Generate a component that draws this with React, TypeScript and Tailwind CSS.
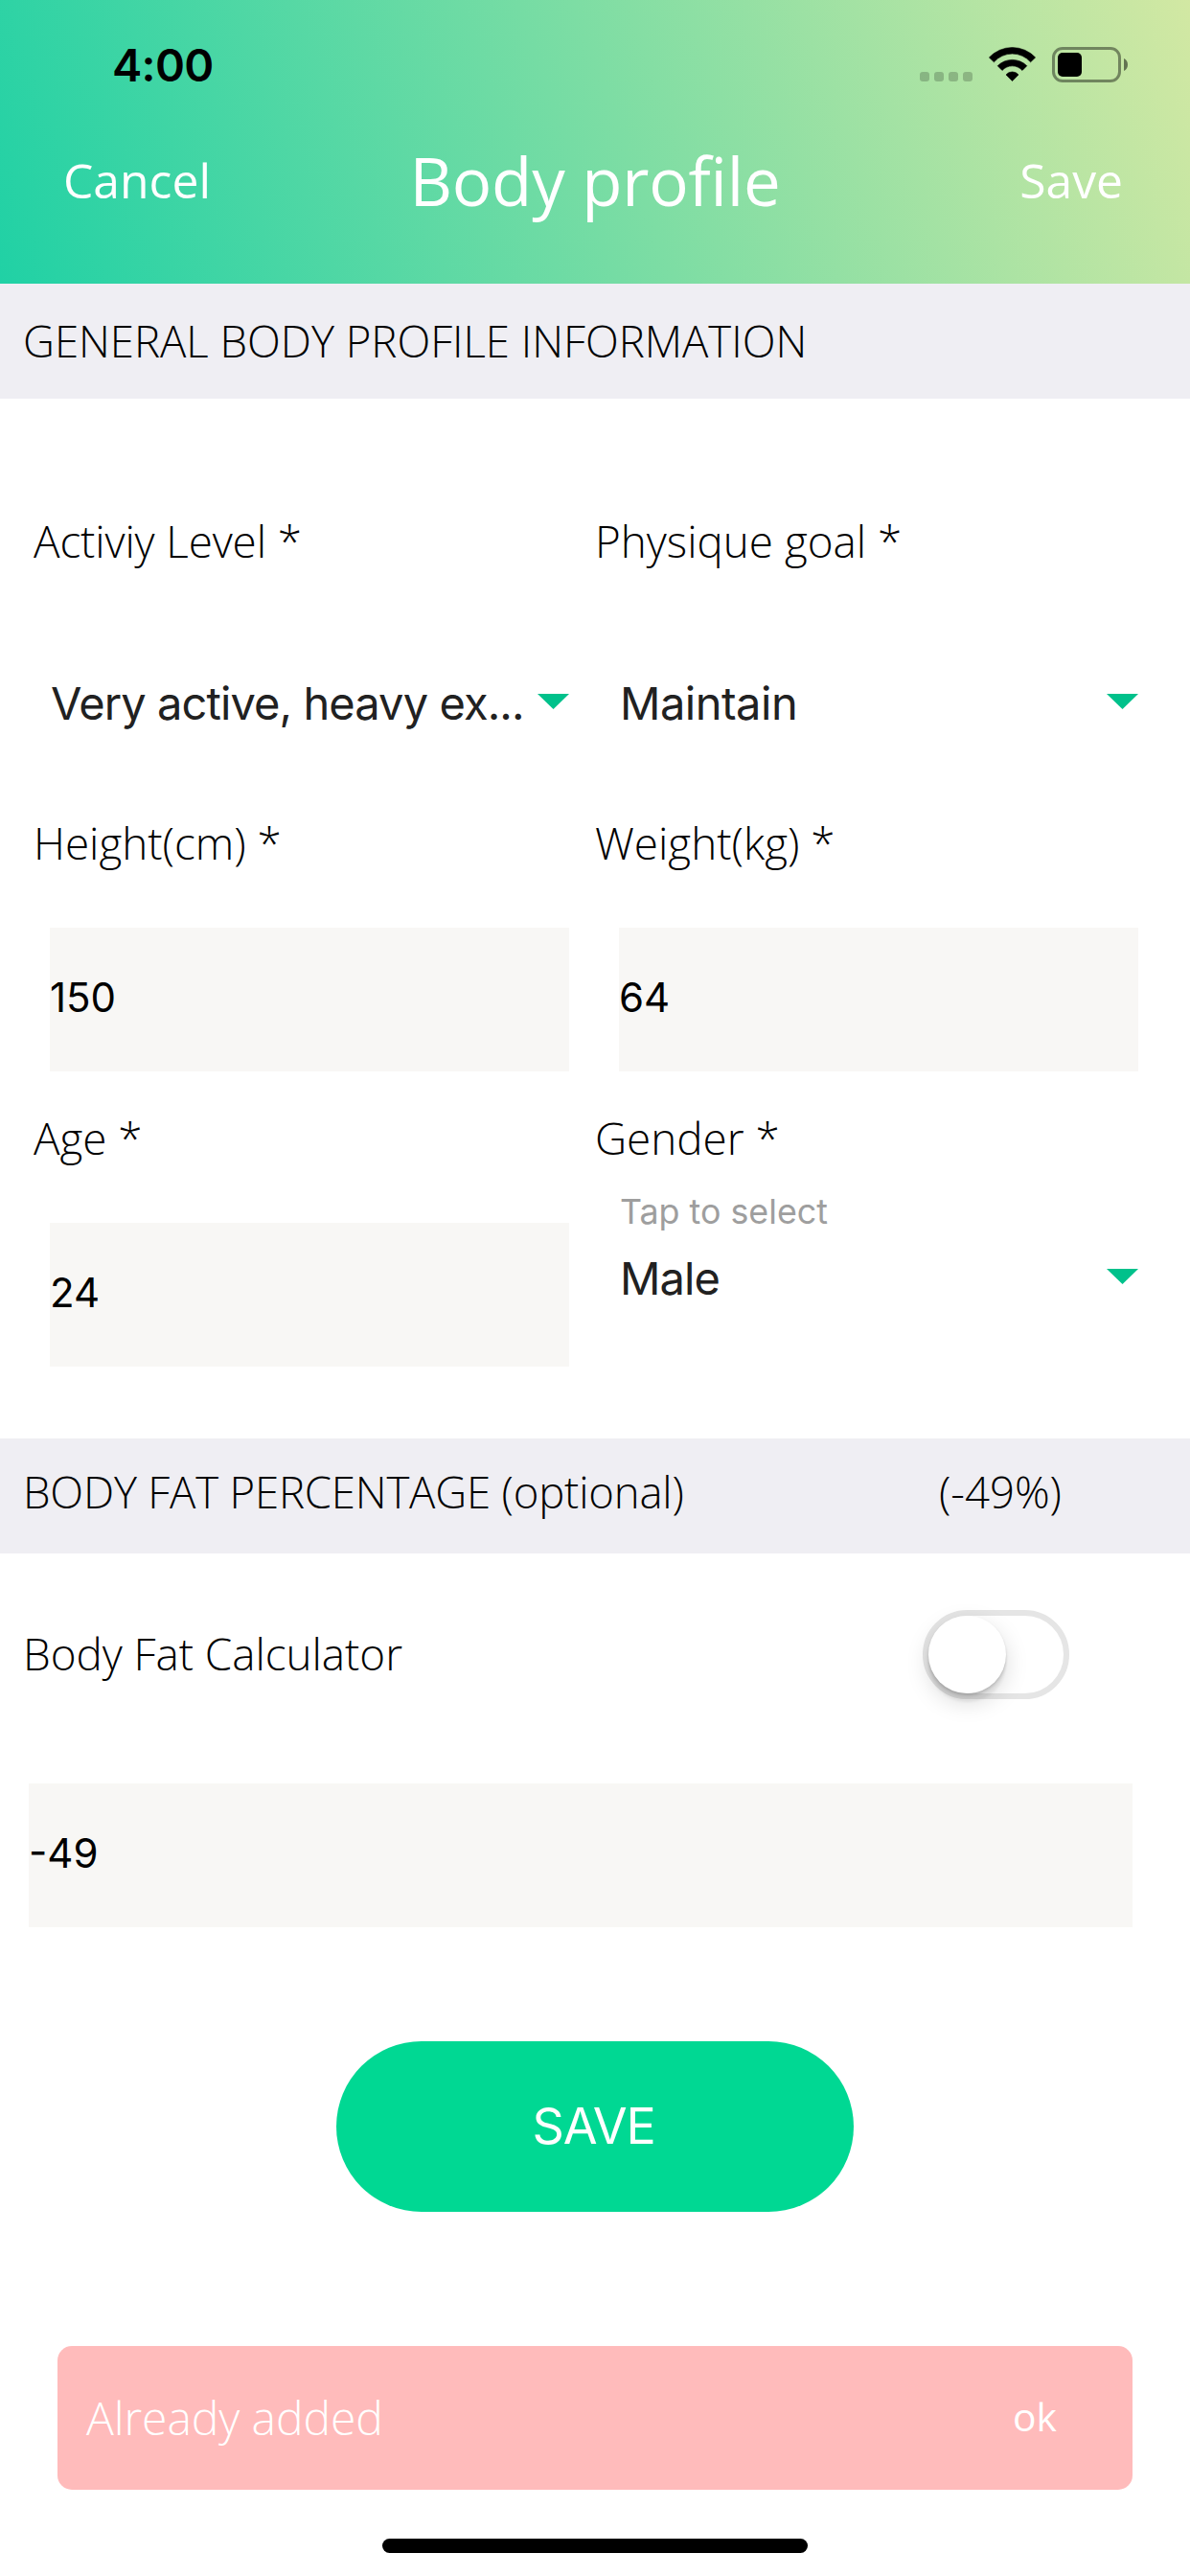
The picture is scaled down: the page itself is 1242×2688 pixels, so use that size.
import type { ReactNode } from "react";

const OPEN = "font-['Open_Sans','Noto_Sans',sans-serif]";
const INTER = "font-['Inter',sans-serif]";

function WifiIcon() {
  return (
    <svg width="49" height="36" viewBox="0 0 49 36" fill="#000" stroke="#000" strokeWidth="0.6" strokeLinejoin="round">
      <path d="M0.4 11A33 33 0 0 1 48.6 11L43.6 15.8A25.3 25.3 0 0 0 5.4 15.8Z" />
      <path d="M9.2 19.7A21.7 21.7 0 0 1 39.8 19.7L35 24.5A14.2 14.2 0 0 0 14 24.5Z" />
      <path d="M18 29A8.4 8.4 0 0 1 31 29L24.5 35.6Z" />
    </svg>
  );
}

function BatteryIcon() {
  return (
    <div className="flex items-center">
      <div className="h-[37px] w-[72px] rounded-[11px] border-3 border-black/42 p-[3px]">
        <div className="h-[25px] w-[25px] rounded-[5px] bg-black" />
      </div>
      <svg className="ml-[3px]" width="4" height="13" viewBox="0 0 4 13">
        <path d="M0 0C2.4 1 4 3.4 4 6.5S2.4 12 0 13Z" fill="#000" fillOpacity="0.5" />
      </svg>
    </div>
  );
}

function StatusBar() {
  return (
    <div className="flex h-[136px] items-start justify-between pr-[65px] pl-[117px]">
      <span className={`${INTER} text-[47px] leading-[136px] font-semibold tracking-[-0.7px] text-black`}>4:00</span>
      <div className="mt-[49px] flex items-start">
        <div className="mt-[26px] mr-[17px] flex gap-[5px]">
          {[0, 1, 2, 3].map((i) => (
            <div key={i} className="size-[10px] rounded-[3px] bg-black/20" />
          ))}
        </div>
        <div className="mr-[17px]">
          <WifiIcon />
        </div>
        <BatteryIcon />
      </div>
    </div>
  );
}

function NavBar() {
  return (
    <div className={`${OPEN} grid h-[104px] grid-cols-[1fr_auto_1fr] items-center pr-[70px] pl-[66px] text-[49.8px] text-white`}>
      <button className="justify-self-start leading-[104px]">Cancel</button>
      <h1 className="pl-[4px] text-[69px] leading-[104px] tracking-[-0.2px]">Body profile</h1>
      <button className="justify-self-end leading-[104px]">Save</button>
    </div>
  );
}

function Label({ children, className = "" }: { children: ReactNode; className?: string }) {
  return (
    <div className={`${OPEN} h-[60px] text-[45.8px] leading-[60px] font-light whitespace-nowrap text-black ${className}`}>
      {children}
    </div>
  );
}

function Select({ value, className }: { value: string; className: string }) {
  return (
    <div className="flex h-[60px] items-start justify-between">
      <span className={`${INTER} text-[47px] leading-[60px] whitespace-nowrap text-[#212121] ${className}`}>{value}</span>
      <svg className="mt-[20px] shrink-0" width="33" height="16" viewBox="0 0 33 16">
        <path d="M0 0H33L16.5 16Z" fill="#00c18b" />
      </svg>
    </div>
  );
}

function Input({ value }: { value: string }) {
  return (
    <div className={`${INTER} h-[150px] bg-[#f8f7f5] text-[42px] leading-[146px] text-black`}>{value}</div>
  );
}

function Toggle() {
  return (
    <div className="h-[93px] w-[153px] rounded-full border-6 border-[#e5e5e5] bg-white">
      <div className="size-[81px] rounded-full bg-white shadow-[0_9px_24px_rgba(0,0,0,0.15),0_9px_3px_rgba(0,0,0,0.06),0_2px_3px_rgba(0,0,0,0.16)]" />
    </div>
  );
}

export default function App() {
  return (
    <div className="flex h-[2688px] w-[1242px] flex-col overflow-hidden bg-white">
      <header className="h-[296px] bg-[linear-gradient(70deg,#20d1a5,#d2e8a3)]">
        <StatusBar />
        <NavBar />
      </header>

      <h2 className={`${OPEN} h-[120px] bg-[#efeef3] pl-[24px] text-[45.5px] leading-[119px] font-light text-black`}>
        GENERAL BODY PROFILE INFORMATION
      </h2>

      <section className="grid h-[1085px] grid-cols-[559px_567px] content-start gap-x-[27px] pt-[118px] pl-[35px]">
        <div>
          <Label className="tracking-[-0.12px]">Activiy Level *</Label>
          <div className="mt-[110px] pl-[17px]">
            <Select value="Very active, heavy ex..." className="pl-[1px] tracking-[-0.9px]" />
          </div>
        </div>
        <div>
          <Label>Physique goal *</Label>
          <div className="mt-[110px] pl-[25px]">
            <Select value="Maintain" className="pl-[1px] tracking-[-0.5px]" />
          </div>
        </div>

        <div className="mt-[85px]">
          <Label>Height(cm) *</Label>
          <div className="mt-[59px] pl-[17px]">
            <Input value="150" />
          </div>
        </div>
        <div className="mt-[85px]">
          <Label>Weight(kg) *</Label>
          <div className="mt-[59px] pl-[25px]">
            <Input value="64" />
          </div>
        </div>

        <div className="mt-[39px]">
          <Label>Age *</Label>
          <div className="mt-[59px] pl-[17px]">
            <Input value="24" />
          </div>
        </div>
        <div className="mt-[39px]">
          <Label>Gender *</Label>
          <div className="mt-[27px] pl-[25px]">
            <div className={`${INTER} mb-[20px] h-[40px] pl-[1px] text-[35.8px] leading-[40px] text-[#9e9e9e]`}>Tap to select</div>
            <Select value="Male" className="pl-[1px] tracking-[-0.9px]" />
          </div>
        </div>
      </section>

      <div className={`${OPEN} flex h-[120px] justify-between bg-[#efeef3] pr-[134px] pl-[24px] text-[45.5px] leading-[111px] font-light text-black`}>
        <h2 className="tracking-[-0.18px]">BODY FAT PERCENTAGE (optional)</h2>
        <span>(-49%)</span>
      </div>

      <div className="flex h-[211px] items-center justify-between pr-[126px] pl-[24px]">
        <Label className="mb-[3px] tracking-[-0.04px]">Body Fat Calculator</Label>
        <Toggle />
      </div>

      <div className="mt-[29px] mr-[60px] ml-[30px]">
        <Input value="-49" />
      </div>

      <button className={`${INTER} mt-[119px] h-[178px] w-[540px] self-center rounded-full bg-[#00d893] pr-[3px] text-[52px] leading-[176px] tracking-[-1.2px] text-white`}>
        SAVE
      </button>

      <div className={`${OPEN} mt-[140px] mr-[60px] ml-[60px] flex h-[150px] items-start justify-between rounded-[15px] bg-[#ffbbbb] pr-[79px] pl-[30px] text-white`}>
        <span className="text-[48px] leading-[149px] font-light tracking-[-0.08px]">Already added</span>
        <button className="text-[40.8px] leading-[147px]">ok</button>
      </div>

      <div className="mt-[51px] h-[15px] w-[444px] self-center rounded-full bg-black" />
    </div>
  );
}
